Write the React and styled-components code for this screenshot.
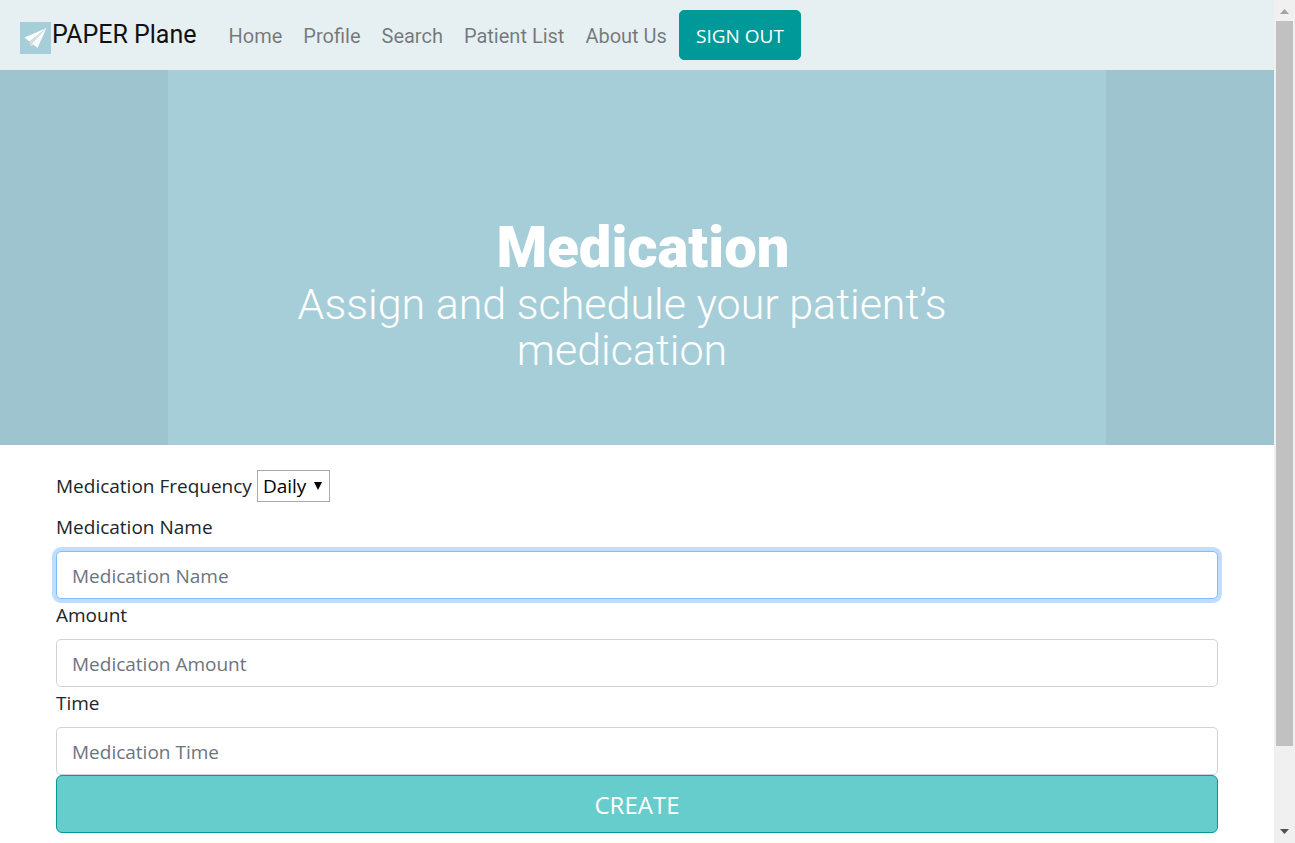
import React from "react";
import styled, { createGlobalStyle } from "styled-components";

const uiFont = '"Segoe UI", "Open Sans", "Noto Sans", sans-serif';
const brandFont = 'Roboto, "Liberation Sans", sans-serif';

const GlobalStyle = createGlobalStyle`
  *, *::before, *::after { box-sizing: border-box; }
  html { scrollbar-width: none; }
  body {
    margin: 0;
    background: #fff;
    color: #212529;
    font-family: ${uiFont};
    font-size: 19px;
    line-height: 32px;
  }
`;

const Shell = styled.div`
  display: flex;
  align-items: flex-start;
`;

const Page = styled.div`
  flex: 1;
  min-width: 0;
  min-height: 100vh;
`;

const Navbar = styled.header`
  display: flex;
  align-items: center;
  min-height: 70px;
  padding: 10px 20px;
  background: #e6eff2;
  font-family: ${brandFont};
`;

const Brand = styled.a`
  display: flex;
  align-items: center;
  gap: 1px;
  margin-right: 22px;
  color: #111;
  font-size: 25px;
  text-decoration: none;
  white-space: nowrap;
`;

const Logo = styled.svg`
  display: block;
  width: 31px;
  height: 32px;
  margin-top: 6px;
`;

const NavLinks = styled.nav`
  display: flex;
  align-items: center;
  gap: 1px;
  margin-right: 2px;
`;

const NavLink = styled.a`
  padding: 10px 10px 8px;
  color: rgba(0, 0, 0, 0.5);
  font-size: 20px;
  text-decoration: none;
  white-space: nowrap;
`;

const SignOutButton = styled.button`
  min-width: 122px;
  height: 50px;
  padding: 2px 15px 0;
  border: 1px solid #009999;
  border-radius: 5px;
  background: #009999;
  color: #fff;
  font-family: ${uiFont};
  font-size: 19px;
  white-space: nowrap;
`;

const Hero = styled.section`
  display: flex;
  justify-content: center;
  background: #9ec5cf;
`;

const HeroPanel = styled.div`
  width: 938px;
  max-width: 100%;
  min-height: 375px;
  padding-top: 143px;
  background: #a6ced8;
  color: #fff;
  font-family: ${brandFont};
  text-align: center;
`;

const HeroTitle = styled.h1`
  margin: 0;
  padding-left: 12px;
  font-size: 58px;
  font-weight: 900;
  line-height: 68px;
`;

const HeroText = styled.p`
  margin: 0;
  padding-right: 30px;
  font-size: 43px;
  font-weight: 300;
  line-height: 46px;
`;

const Form = styled.form`
  display: flex;
  flex-direction: column;
  padding: 25px 56px 40px;
`;

const FrequencyRow = styled.div`
  display: flex;
  align-items: center;
  gap: 5px;
  margin-bottom: 9px;
`;

const SelectBox = styled.div`
  position: relative;
  width: 73px;
`;

const Select = styled.select`
  display: block;
  width: 100%;
  height: 32px;
  padding: 0 20px 0 5px;
  border: 1px solid #a9a9a9;
  border-radius: 0;
  background: #fff;
  color: #000;
  font: inherit;
  line-height: 30px;
  appearance: none;
`;

const SelectArrow = styled.svg`
  position: absolute;
  top: 12px;
  right: 8px;
  width: 8px;
  height: 8px;
  pointer-events: none;
`;

const Label = styled.label`
  line-height: 32px;
`;

const Field = styled.div`
  display: flex;
  flex-direction: column;
  gap: 8px;
`;

const Input = styled.input`
  width: 100%;
  height: 48px;
  padding: 1px 15px 0;
  border: 1px solid #ced4da;
  border-radius: 5px;
  outline: none;
  background: #fff;
  color: #495057;
  font: inherit;

  &::placeholder {
    color: #6c757d;
    opacity: 1;
  }

  &:focus {
    border-color: #80bdff;
    box-shadow: 0 0 0 4px rgba(0, 123, 255, 0.25);
  }
`;

const CreateButton = styled.button`
  height: 58px;
  border: 1px solid #009999;
  border-radius: 6px;
  background: #66cdcc;
  color: #fff;
  font-family: inherit;
  font-size: 24px;
`;

const ScrollTrack = styled.div`
  position: sticky;
  top: 0;
  display: flex;
  flex-direction: column;
  align-items: center;
  width: 21px;
  height: 100vh;
  background: #f0f0f0;
`;

const ScrollCap = styled.svg`
  flex: none;
  width: 21px;
  height: 21px;
`;

const ScrollLane = styled.div`
  flex: 1;
  width: 17px;
`;

const ScrollThumb = styled.div`
  width: 100%;
  height: 90.5%;
  background: #c1c1c1;
`;

const links = ["Home", "Profile", "Search", "Patient List", "About Us"];

const fields = [
  { id: "name", label: "Medication Name", placeholder: "Medication Name" },
  { id: "amount", label: "Amount", placeholder: "Medication Amount" },
  { id: "time", label: "Time", placeholder: "Medication Time" },
];

function PlaneLogo() {
  return (
    <Logo viewBox="0 0 31 32" aria-hidden="true">
      <rect width="31" height="32" fill="#a6ced8" />
      <path d="M26.500 6 4.500 15.500 9.500 19.500Z" fill="#fff" />
      <path d="M26.500 6 9.500 19.500 10.500 24Z" fill="#d3dee1" />
      <path d="M26.500 6 10.500 24 12 21.500Z" fill="#a9b7bd" />
      <path d="M26.500 6 12 21.500 17.500 26Z" fill="#f8fbfb" />
      <path d="M10.500 24 12 21.500 13.500 22.700Z" fill="#e8eff0" />
    </Logo>
  );
}

export default function App() {
  return (
    <>
      <GlobalStyle />
      <Shell>
        <Page>
          <Navbar>
            <Brand href="#">
              <PlaneLogo />
              PAPER Plane
            </Brand>
            <NavLinks>
              {links.map((text) => (
                <NavLink key={text} href="#">{text}</NavLink>
              ))}
            </NavLinks>
            <SignOutButton type="button">SIGN OUT</SignOutButton>
          </Navbar>
          <main>
            <Hero>
              <HeroPanel>
                <HeroTitle>Medication</HeroTitle>
                <HeroText>
                  Assign and schedule your patient’s
                  <br />
                  medication
                </HeroText>
              </HeroPanel>
            </Hero>
            <Form onSubmit={(event) => event.preventDefault()}>
              <FrequencyRow>
                <Label htmlFor="frequency">Medication Frequency</Label>
                <SelectBox>
                  <Select id="frequency" defaultValue="Daily">
                    <option>Daily</option>
                    <option>Weekly</option>
                    <option>Monthly</option>
                  </Select>
                  <SelectArrow viewBox="0 0 8 8" aria-hidden="true">
                    <path d="M0 0h8L4 8z" fill="#000" />
                  </SelectArrow>
                </SelectBox>
              </FrequencyRow>
              {fields.map((field, index) => (
                <Field key={field.id}>
                  <Label htmlFor={field.id}>{field.label}</Label>
                  <Input
                    id={field.id}
                    type="text"
                    placeholder={field.placeholder}
                    autoFocus={index === 0}
                  />
                </Field>
              ))}
              <CreateButton type="submit">CREATE</CreateButton>
            </Form>
          </main>
        </Page>
        <ScrollTrack aria-hidden="true">
          <ScrollCap viewBox="0 0 21 21">
            <path d="M6 14h9l-4.500-5z" fill="#a3a3a3" />
          </ScrollCap>
          <ScrollLane>
            <ScrollThumb />
          </ScrollLane>
          <ScrollCap viewBox="0 0 21 21">
            <path d="M6 7h9l-4.500 5z" fill="#505050" />
          </ScrollCap>
        </ScrollTrack>
      </Shell>
    </>
  );
}
